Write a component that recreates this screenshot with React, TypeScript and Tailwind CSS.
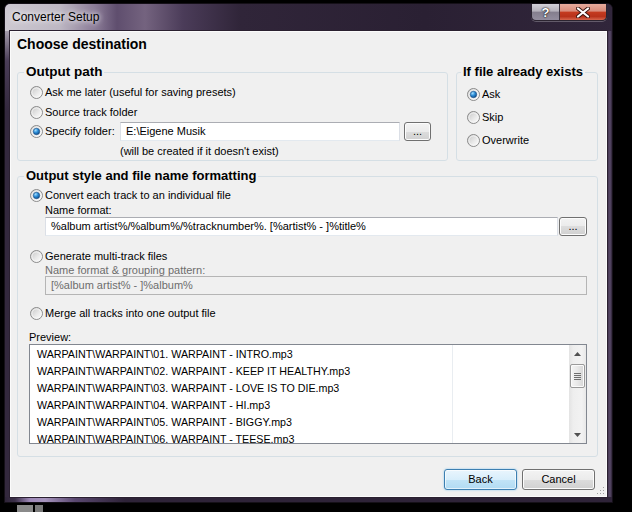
import clsx from "clsx";

const previewRows = [
  "WARPAINT\\WARPAINT\\01. WARPAINT - INTRO.mp3",
  "WARPAINT\\WARPAINT\\02. WARPAINT - KEEP IT HEALTHY.mp3",
  "WARPAINT\\WARPAINT\\03. WARPAINT - LOVE IS TO DIE.mp3",
  "WARPAINT\\WARPAINT\\04. WARPAINT - HI.mp3",
  "WARPAINT\\WARPAINT\\05. WARPAINT - BIGGY.mp3",
  "WARPAINT\\WARPAINT\\06. WARPAINT - TEESE.mp3",
];

function Radio({ checked = false }: { checked?: boolean }) {
  return (
    <svg width="13" height="13" viewBox="0 0 13 13" className="shrink-0">
      <defs>
        <linearGradient id="rb-fill" x1="0" y1="0" x2="1" y2="1">
          <stop offset="0" stopColor="#c4c4c4" />
          <stop offset="0.6" stopColor="#ececec" />
          <stop offset="1" stopColor="#ffffff" />
        </linearGradient>
        <radialGradient id="rb-dot" cx="0.35" cy="0.3" r="0.8">
          <stop offset="0" stopColor="#a6e0ff" />
          <stop offset="0.45" stopColor="#2e8fd9" />
          <stop offset="1" stopColor="#0b417c" />
        </radialGradient>
      </defs>
      <circle cx="6.5" cy="6.5" r="6" fill="url(#rb-fill)" stroke="#8b8b8b" />
      <circle cx="6.5" cy="6.5" r="4.6" fill="none" stroke="#f7f7f7" strokeWidth="0.8" />
      {checked && <circle cx="6.5" cy="6.5" r="3.2" fill="url(#rb-dot)" stroke="#174d86" strokeWidth="0.6" />}
    </svg>
  );
}

function WinButton({
  children,
  primary = false,
  className,
}: {
  children: React.ReactNode;
  primary?: boolean;
  className?: string;
}) {
  return (
    <button
      className={clsx(
        "flex items-center justify-center rounded-[3px] border text-[11px] text-black",
        primary
          ? "border-[#3c7fb1] bg-[linear-gradient(#e9f5fd,#d8eefb_50%,#c2e4f7_50%,#b1dbf3)] shadow-[inset_0_0_0_1px_#ffffffa0,0_0_2px_#7fc3ee]"
          : "border-[#707070] bg-[linear-gradient(#f3f3f3,#ebebeb_50%,#dddddd_50%,#d0d0d0)] shadow-[inset_0_0_0_1px_#fcfcfc]",
        className
      )}
    >
      {children}
    </button>
  );
}

function TextBox({ children, disabled = false, className }: { children: React.ReactNode; disabled?: boolean; className?: string }) {
  return (
    <div
      className={clsx(
        "h-[19px] overflow-hidden whitespace-nowrap border pl-[5px] text-[11px] leading-[17px]",
        disabled
          ? "border-[#b5b5b5] bg-[#f0f0f0] text-[#6d6d6d]"
          : "border-[#abadb3] border-x-[#dbdfe6] border-b-[#e3e9ef] bg-white text-black",
        className
      )}
    >
      {children}
    </div>
  );
}

function Option({ label, checked, className }: { label: string; checked?: boolean; className?: string }) {
  return (
    <div className={clsx("flex items-center gap-[2px]", className)}>
      <Radio checked={checked} />
      <span className="text-[11px] text-black">{label}</span>
    </div>
  );
}

function Arrow({ down = false }: { down?: boolean }) {
  return (
    <svg width="7" height="4" viewBox="0 0 7 4">
      <path d={down ? "M0 0h7L3.5 4z" : "M3.5 0L7 4H0z"} fill="#505050" />
    </svg>
  );
}

export default function App() {
  return (
    <div className="h-[512px] w-[632px] overflow-hidden bg-black font-['Liberation_Sans',Arial,sans-serif] pl-[4px] pt-[3px]">
      <div className="flex h-[500px] w-[609px] flex-col overflow-hidden rounded-t-[6px] border border-[#151018] bg-[#33283d]">
        {/* title bar */}
        <div className="flex h-[27px] shrink-0 bg-[linear-gradient(90deg,#cdc9d1_0px,#bdb7c3_55px,#8a7b97_90px,#5f4e6e_112px,#74637f_140px,#4b3c59_178px,#302539_235px,#2a2033_420px,#31263b_609px)]">
          <div className="pl-[7px] pt-[6px] text-[12px] leading-[15px] text-black [text-shadow:0_0_5px_#ffffff,0_0_9px_#ffffffb0]">
            Converter Setup
          </div>
          <div className="ml-auto mr-[5px] flex h-[17px] overflow-hidden rounded-b-[5px] border border-t-0 border-[#2b2430] shadow-[0_1px_0_#ffffff40]">
            <div className="flex w-[28px] items-center justify-center border-r border-[#3a3340] bg-[linear-gradient(#d2d0d8,#b5b1bb_45%,#847e8d_50%,#938d9e)] text-[13px] font-bold leading-none text-white [text-shadow:0_0_2px_#000,0_0_1px_#000]">
              ?
            </div>
            <div className="flex w-[46px] items-center justify-center bg-[linear-gradient(#e7ab9d,#d98c7b_45%,#c53b20_50%,#b8321b_78%,#d6664d)]">
              <svg width="14" height="11" viewBox="0 0 14 11">
                <path d="M2 1.5l10 8M12 1.5l-10 8" stroke="#3a1510" strokeWidth="4" strokeLinecap="round" />
                <path d="M2 1.5l10 8M12 1.5l-10 8" stroke="#ffffff" strokeWidth="2.2" strokeLinecap="round" />
              </svg>
            </div>
          </div>
        </div>

        {/* frame + client */}
        <div className="flex h-[466px] shrink-0">
          <div className="w-[5px] bg-[linear-gradient(#a49cab,#4a3d57_30px,#33283d_80px)]" />
          <div className="relative h-[466px] w-[597px] border border-[#fbfbfb] bg-[#f0f0f0] shadow-[0_0_0_1px_#2a2030]">
            <div className="h-[25px] pl-[6px] text-[14px] font-bold leading-[25px] text-black">Choose destination</div>

            <div className="mt-[7px] flex gap-[8px] pl-[6px]">
              <fieldset className="h-[97px] w-[431px] rounded-[3px] border border-[#d5dfe5] pl-[12px]">
                <legend className="-ml-[6px] px-[2px] text-[13.5px] font-bold leading-[16px] text-black">Output path</legend>
                <div className="pt-[2px]">
                  <Option className="h-[20px]" label="Ask me later (useful for saving presets)" />
                  <Option className="h-[20px]" label="Source track folder" />
                  <div className="flex h-[19px] items-center">
                    <Option className="w-[90px]" label="Specify folder:" checked />
                    <TextBox className="w-[280px]">E:\Eigene Musik</TextBox>
                    <WinButton className="ml-[4px] h-[19px] w-[27px] leading-none">...</WinButton>
                  </div>
                  <div className="mt-[2px] h-[16px] pl-[90px] text-[11px] leading-[16px] text-black">
                    (will be created if it doesn't exist)
                  </div>
                </div>
              </fieldset>

              <fieldset className="h-[97px] w-[142px] rounded-[3px] border border-[#d5dfe5] pl-[10px]">
                <legend className="-ml-[6px] px-[2px] text-[13px] font-bold leading-[16px] text-black">If file already exists</legend>
                <div className="pt-[3px]">
                  <Option className="h-[23px]" label="Ask" checked />
                  <Option className="h-[23px]" label="Skip" />
                  <Option className="h-[23px]" label="Overwrite" />
                </div>
              </fieldset>
            </div>

            <fieldset className="ml-[6px] mt-[7px] h-[289px] w-[581px] rounded-[3px] border border-[#d5dfe5] pl-[12px] pr-[10px]">
              <legend className="-ml-[6px] px-[2px] text-[13px] font-bold leading-[16px] text-black">
                Output style and file name formatting
              </legend>
              <div className="pt-[2px]">
                <Option className="h-[18px]" label="Convert each track to an individual file" checked />
                <div className="h-[13px] pl-[15px] text-[11px] leading-[13px] text-black">Name format:</div>
                <div className="flex pl-[15px]">
                  <TextBox className="flex-1">%album artist%/%album%/%tracknumber%. [%artist% - ]%title%</TextBox>
                  <WinButton className="ml-[1px] h-[19px] w-[28px] leading-none">...</WinButton>
                </div>

                <Option className="mt-[11px] h-[18px]" label="Generate multi-track files" />
                <div className="h-[11px] pl-[15px] text-[11px] leading-[11px] text-[#6d6d6d]">Name format &amp; grouping pattern:</div>
                <div className="pl-[15px]">
                  <TextBox disabled>[%album artist% - ]%album%</TextBox>
                </div>

                <Option className="mt-[8px] h-[20px]" label="Merge all tracks into one output file" />

                <div className="-ml-[1px] mt-[7px] h-[14px] text-[11px] leading-[14px] text-black">Preview:</div>
                <div className="-ml-[1px] flex h-[100px] border border-[#828790] bg-white">
                  <div className="w-[423px] overflow-hidden border-r border-[#e9edf1] pt-[1px]">
                    {previewRows.map((row) => (
                      <div key={row} className="h-[17px] whitespace-nowrap pl-[7px] text-[10.7px] leading-[17px] text-black">
                        {row}
                      </div>
                    ))}
                  </div>
                  <div className="flex-1" />
                  <div className="flex w-[17px] flex-col bg-[linear-gradient(90deg,#e3e3e3,#eeeeee_25%,#f2f2f2_75%,#e8e8e8)]">
                    <div className="flex h-[17px] items-center justify-center">
                      <Arrow />
                    </div>
                    <div className="mx-[1px] mt-[2px] flex h-[24px] flex-col items-center justify-center gap-[1px] rounded-[2px] border border-[#9a9a9a] bg-[linear-gradient(90deg,#f5f5f5,#e8e8e8_50%,#d6d6d6)] shadow-[inset_0_0_0_1px_#fbfbfb]">
                      <div className="h-[1px] w-[7px] bg-[#6f6f6f]" />
                      <div className="h-[1px] w-[7px] bg-[#6f6f6f]" />
                      <div className="h-[1px] w-[7px] bg-[#6f6f6f]" />
                      <div className="h-[1px] w-[7px] bg-[#6f6f6f]" />
                    </div>
                    <div className="flex-1" />
                    <div className="flex h-[17px] items-center justify-center">
                      <Arrow down />
                    </div>
                  </div>
                </div>
              </div>
            </fieldset>

            <div className="mt-[12px] flex justify-end gap-[5px] pr-[11px]">
              <WinButton primary className="h-[21px] w-[73px]">
                Back
              </WinButton>
              <WinButton className="h-[21px] w-[73px]">Cancel</WinButton>
            </div>

            <svg width="10" height="10" viewBox="0 0 10 10" className="absolute bottom-[1px] right-[1px]">
              {[
                [8, 2],
                [8, 5],
                [5, 5],
                [8, 8],
                [5, 8],
                [2, 8],
              ].map(([x, y]) => (
                <rect key={`${x}-${y}`} x={x} y={y} width="1" height="1" fill="#a0a0a0" />
              ))}
            </svg>
          </div>
          <div className="w-[5px] bg-[linear-gradient(90deg,#3a2d47,#5a4b6a_60%,#2f2538)]" />
        </div>

        <div className="h-[5px] shrink-0 bg-[linear-gradient(90deg,#2e2438_0px,#3b2f48_10px,#9e89b8_25px,#a694bd_40px,#5a4870_70px,#2e2338_120px,#2e2338_609px)]" />
      </div>
      <div className="ml-[13px] mt-[2px] flex gap-[2px]">
        <div className="h-[7px] w-[16px] bg-[#8a8a8a]" />
        <div className="h-[7px] w-[8px] bg-[#7a7a7a]" />
      </div>
    </div>
  );
}
